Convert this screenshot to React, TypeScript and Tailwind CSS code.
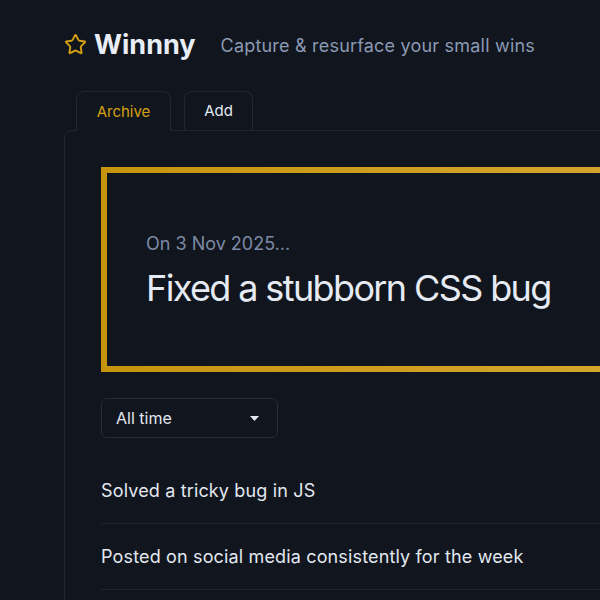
import { Star } from 'lucide-react';

const wins = ['Solved a tricky bug in JS', 'Posted on social media consistently for the week'];

function Header() {
  return (
    <header className="flex items-center pt-[31px]">
      <Star className="h-[23px] w-[23px] text-[#d3a012]" strokeWidth={2} />
      <h1 className="ml-[7px] text-[27px] font-bold leading-none text-[#e9eef6]">Winnny</h1>
      <p className="ml-[25px] pt-[2px] text-[18px] leading-none tracking-[0.2px] text-[#8b9ab3]">
        Capture &amp; resurface your small wins
      </p>
    </header>
  );
}

function Tabs() {
  return (
    <div className="mt-[33px] flex pl-[12px]">
      <button className="relative z-10 -mb-px h-[40px] w-[95px] rounded-t-lg border border-b-0 border-[#1f2733] bg-[#11151e] pt-px text-[15px] text-[#d3a012]">
        Archive
      </button>
      <button className="ml-[13px] h-[39px] w-[69px] rounded-t-lg border border-b-0 border-[#1f2733] pt-px text-[15px] text-[#e2e8f0]">
        Add
      </button>
    </div>
  );
}

export default function App() {
  return (
    <div className="h-[600px] w-full overflow-hidden bg-[#11151e] font-['Inter',sans-serif]">
      <div className="w-[1000px] pl-[64px]">
        <Header />
        <Tabs />
        <section className="h-[600px] rounded-tl-lg border border-[#1f2733] px-[36px] pt-[36px]">
          <div className="bg-gradient-to-r from-[#c6940c] to-[#dcb23a] p-[6px]">
            <div className="flex h-[193px] flex-col justify-center bg-[#11151e] px-[39px]">
              <p className="text-[18px] leading-6 text-[#7c8aa3]">On 3 Nov 2025...</p>
              <p className="mt-[12px] text-[36px] leading-10 tracking-[-0.045em] text-[#e6ebf3]">
                Fixed a stubborn CSS bug
              </p>
            </div>
          </div>

          <div className="mt-[26px] flex h-[40px] w-[177px] items-center justify-between rounded-md border border-[#232c3a] pl-[14px] pr-[18px]">
            <span className="text-[16px] text-[#e2e8f0]">All time</span>
            <svg width="9" height="5" viewBox="0 0 9 5" className="text-[#e2e8f0]">
              <path d="M0 0h9L4.5 5z" fill="currentColor" />
            </svg>
          </div>

          <ul className="mt-[20px]">
            {wins.map((w) => (
              <li
                key={w}
                className="flex h-[66px] items-center border-b border-[#1f2733] text-[18px] tracking-[0.15px] text-[#e2e8f0]"
              >
                {w}
              </li>
            ))}
          </ul>
        </section>
      </div>
    </div>
  );
}
